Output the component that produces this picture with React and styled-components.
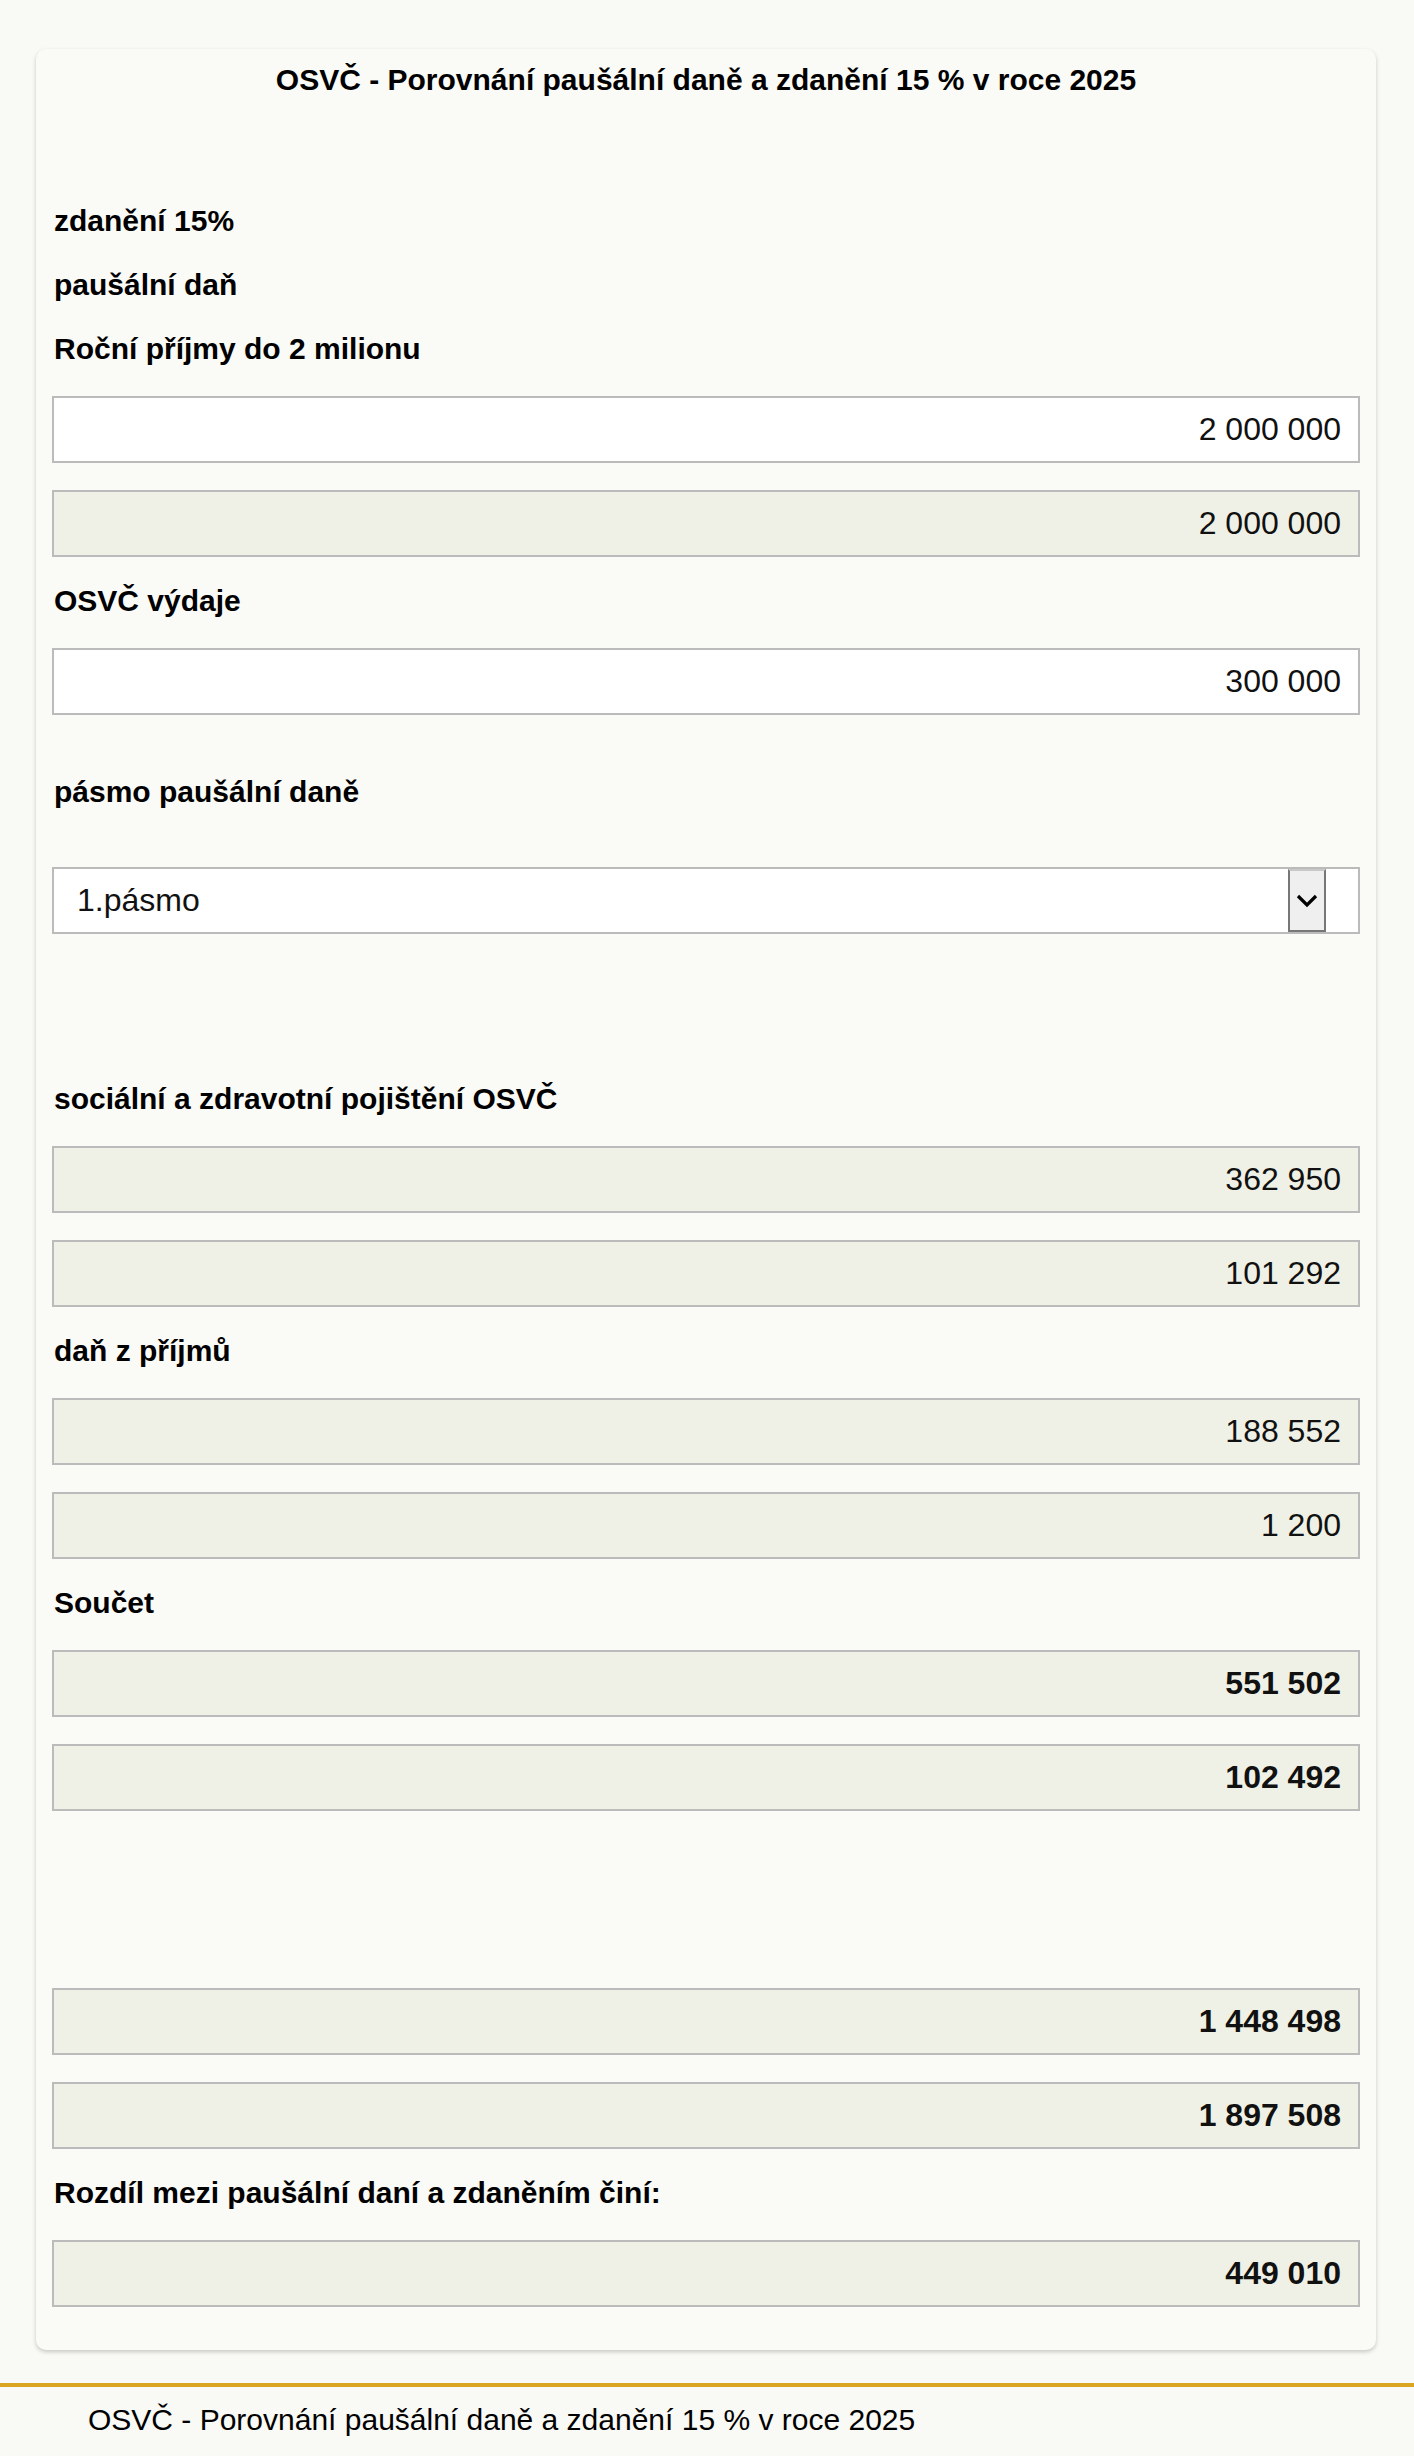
import styled, { createGlobalStyle } from "styled-components";

const GlobalStyle = createGlobalStyle`
  html, body {
    margin: 0;
    padding: 0;
    background: #f9f9f5;
    font-family: "Liberation Sans", Arial, sans-serif;
    color: #000;
  }
`;

export default function App() {
    return (
        <>
            <GlobalStyle />
            <Page>
                <Card>
                    <Title>OSVČ - Porovnání paušální daně a zdanění 15 % v roce 2025</Title>
                    <Spacer $h={107} />
                    <Label>zdanění 15%</Label>
                    <Label>paušální daň</Label>
                    <Label>Roční příjmy do 2 milionu</Label>
                    <Field defaultValue="2 000 000" />
                    <Field readOnly value="2 000 000" />
                    <Label>OSVČ výdaje</Label>
                    <Field defaultValue="300 000" />
                    <Spacer $h={33} />
                    <Label $after={58}>pásmo paušální daně</Label>
                    <SelectBox>
                        <SelectText>1.pásmo</SelectText>
                        <ArrowButton>
                            <svg width="22" height="15" viewBox="0 0 22 15">
                                <path d="M2 3 L11 12 L20 3" fill="none" stroke="#000" strokeWidth="3.2" />
                            </svg>
                        </ArrowButton>
                    </SelectBox>
                    <Spacer $h={148} />
                    <Label>sociální a zdravotní pojištění OSVČ</Label>
                    <Field readOnly value="362 950" />
                    <Field readOnly value="101 292" />
                    <Label>daň z příjmů</Label>
                    <Field readOnly value="188 552" />
                    <Field readOnly value="1 200" />
                    <Label>Součet</Label>
                    <Field readOnly $bold value="551 502" />
                    <Field readOnly $bold value="102 492" />
                    <Spacer $h={150} />
                    <Field readOnly $bold value="1 448 498" />
                    <Field readOnly $bold value="1 897 508" />
                    <Label>Rozdíl mezi paušální daní a zdaněním činí:</Label>
                    <Field readOnly $bold $last value="449 010" />
                </Card>
            </Page>
            <Footer>
                <FooterText>OSVČ - Porovnání paušální daně a zdanění 15 % v roce 2025</FooterText>
            </Footer>
        </>
    )
}

const Page = styled.div`
    padding: 49px 38px 0 36px;
`
const Card = styled.div`
    box-sizing: border-box;
    background: #fafaf6;
    border-radius: 10px;
    box-shadow: 0 2px 4px rgba(0, 0, 0, 0.2);
    padding: 14px 16px 43px 16px;
    display: flex;
    flex-direction: column;
`
const Title = styled.h1`
    margin: 0;
    font-size: 30px;
    line-height: 34px;
    font-weight: 700;
    text-align: center;
`
const Spacer = styled.div`
    height: ${p => p.$h}px;
`
const Label = styled.div`
    padding-left: 2px;
    font-size: 30px;
    line-height: 34px;
    font-weight: 700;
    margin-bottom: ${p => p.$after ?? 30}px;
`
const Field = styled.input`
    box-sizing: border-box;
    width: 100%;
    height: 67px;
    margin: 0 0 ${p => p.$last ? 0 : 27}px 0;
    border: 2px solid #bbbbbb;
    border-radius: 0;
    background: ${p => p.readOnly ? "#f0f1e6" : "#ffffff"};
    padding: 0 17px;
    text-align: right;
    font-family: "Liberation Sans", Arial, sans-serif;
    font-size: 32px;
    font-weight: ${p => p.$bold ? 700 : 400};
    color: #111;
    outline: none;
`
const SelectBox = styled.div`
    box-sizing: border-box;
    height: 67px;
    border: 2px solid #bbbbbb;
    background: #ffffff;
    display: flex;
    align-items: center;
    padding: 0 32px 0 23px;
`
const SelectText = styled.span`
    flex: 1;
    font-size: 32px;
    color: #111;
`
const ArrowButton = styled.span`
    box-sizing: border-box;
    width: 38px;
    height: 63px;
    background: #efefef;
    border: 2px solid #777777;
    border-top-color: #c8c8c8;
    display: flex;
    align-items: center;
    justify-content: center;
`
const Footer = styled.footer`
    margin-top: 33px;
    border-top: 4px solid #daa520;
    padding: 16px 88px 20px;
`
const FooterText = styled.div`
    font-size: 30px;
    line-height: 34px;
`
